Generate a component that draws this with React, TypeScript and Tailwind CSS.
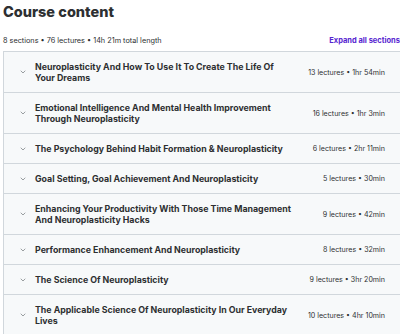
import { ChevronDown } from 'lucide-react';

const sections = [
  { title: 'Neuroplasticity And How To Use It To Create The Life Of Your Dreams', info: '13 lectures • 1hr 54min' },
  { title: 'Emotional Intelligence And Mental Health Improvement Through Neuroplasticity', info: '16 lectures • 1hr 3min' },
  { title: 'The Psychology Behind Habit Formation & Neuroplasticity', info: '6 lectures • 2hr 11min' },
  { title: 'Goal Setting, Goal Achievement And Neuroplasticity', info: '5 lectures • 30min' },
  { title: 'Enhancing Your Productivity With Those Time Management And Neuroplasticity Hacks', info: '9 lectures • 42min' },
  { title: 'Performance Enhancement And Neuroplasticity', info: '8 lectures • 32min' },
  { title: 'The Science Of Neuroplasticity', info: '9 lectures • 3hr 20min' },
  { title: 'The Applicable Science Of Neuroplasticity In Our Everyday Lives', info: '10 lectures • 4hr 10min' },
];

export default function App() {
  return (
    <div className="w-[400px] h-[334px] overflow-hidden bg-white text-[#2d2f31]" style={{ fontFamily: 'Inter, "Noto Sans", sans-serif' }}>
      <div className="w-[404px] pl-[3px]">
        <h2 className="pt-[2px] text-[14.5px] leading-[20px] font-extrabold">Course content</h2>

        <div className="mt-[14px] flex items-center justify-between pr-[4px]">
          <span className="text-[7.3px] leading-[10px] text-[#2d2f31]">8 sections • 76 lectures • 14h 21m total length</span>
          <span className="text-[7.5px] leading-[10px] font-bold text-[#5624d0]">Expand all sections</span>
        </div>

        {/* Sections */}
        <div className="mt-[5px] border border-[#d1d7dc] border-b-0">
          {sections.map((s, i) => (
            <div
              key={s.title}
              className={`flex items-center bg-[#f7f9fa] py-[9px] pr-[18px] ${i > 0 ? 'border-t border-[#d1d7dc]' : ''}`}
            >
              <div className="w-[31px] flex justify-end pr-[8px]">
                <ChevronDown className="w-[8px] h-[8px] text-[#6a6f73]" strokeWidth={2} />
              </div>
              <div className="w-[259px] text-[8.8px] leading-[11px] font-bold">{s.title}</div>
              <div className="flex-1 text-right text-[7.1px] leading-[11px] text-[#2d2f31]">{s.info}</div>
            </div>
          ))}
        </div>
      </div>
    </div>
  );
}
